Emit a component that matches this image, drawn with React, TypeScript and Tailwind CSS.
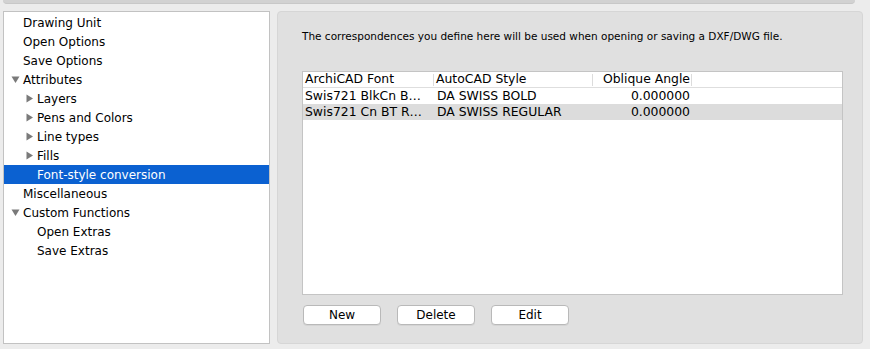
import React from "react";

const Tri = ({ open }: { open: boolean }) => (
  <svg width="9" height="9" viewBox="0 0 9 9" className="shrink-0">
    {open ? (
      <polygon points="0.5,1.5 8.5,1.5 4.5,8" fill="#7a7a7a" />
    ) : (
      <polygon points="1.5,0.5 1.5,8.5 8,4.5" fill="#7a7a7a" />
    )}
  </svg>
);

type Item = { label: string; level: number; tri?: "open" | "closed"; sel?: boolean };

const items: Item[] = [
  { label: "Drawing Unit", level: 0 },
  { label: "Open Options", level: 0 },
  { label: "Save Options", level: 0 },
  { label: "Attributes", level: 0, tri: "open" },
  { label: "Layers", level: 1, tri: "closed" },
  { label: "Pens and Colors", level: 1, tri: "closed" },
  { label: "Line types", level: 1, tri: "closed" },
  { label: "Fills", level: 1, tri: "closed" },
  { label: "Font-style conversion", level: 1, sel: true },
  { label: "Miscellaneous", level: 0 },
  { label: "Custom Functions", level: 0, tri: "open" },
  { label: "Open Extras", level: 1 },
  { label: "Save Extras", level: 1 },
];

export default function App() {
  return (
    <div
      className="w-[870px] h-[349px] bg-[#ececec] flex flex-col overflow-hidden"
      style={{ fontFamily: '"DejaVu Sans", "Liberation Sans", sans-serif' }}
    >
      <div className="ml-[3px] w-[852px] h-[4px] rounded-b-[5px] bg-[#d2d2d2] border-b border-[#c8c8c8]" />
      <div className="flex mt-[7px]">
        <div className="ml-[3px] w-[267px] h-[333px] bg-white border border-[#c2c2c2] pt-[1px]">
          {items.map((it) => (
            <div
              key={it.label}
              className={`h-[19px] flex items-center text-[12px] ${
                it.sel ? "bg-[#0b61d1] text-white" : "text-black"
              }`}
              style={{ paddingLeft: it.level === 0 ? 7 : 21 }}
            >
              <div className="w-[11px] flex items-center">
                {it.tri ? <Tri open={it.tri === "open"} /> : null}
              </div>
              <span className="ml-[1px] leading-none">{it.label}</span>
            </div>
          ))}
        </div>
        <div className="ml-[7px] w-[586px] h-[333px] bg-[#e0e0e0] border border-[#d6d6d6] rounded-[4px] pl-[24px] pt-[17px]">
          <div className="text-[10.5px] leading-[14px] text-black whitespace-nowrap">
            The correspondences you define here will be used when opening or saving a DXF/DWG file.
          </div>
          <div className="mt-[28px] w-[541px] h-[224px] bg-white border border-[#c4c4c4] text-[12.4px] text-black">
            <div className="h-[16px] flex items-center border-b border-[#dedede]">
              <div className="w-[131px] pl-[2px] border-r border-[#dcdcdc] h-[12px] flex items-center whitespace-nowrap">ArchiCAD Font</div>
              <div className="w-[159px] pl-[2px] border-r border-[#dcdcdc] h-[12px] flex items-center whitespace-nowrap">AutoCAD Style</div>
              <div className="w-[99px] pr-[1px] border-r border-[#dcdcdc] h-[12px] flex items-center justify-end whitespace-nowrap">Oblique Angle</div>
            </div>
            {[
              ["Swis721 BlkCn B\u2026", "DA SWISS BOLD", "0.000000", false],
              ["Swis721 Cn BT R\u2026", "DA SWISS REGULAR", "0.000000", true],
            ].map(([a, b, c, g]) => (
              <div key={a as string} className={`h-[16px] flex items-center ${g ? "bg-[#dcdcdc]" : ""}`}>
                <div className="w-[131px] pl-[2px] whitespace-nowrap overflow-hidden">{a}</div>
                <div className="w-[159px] pl-[3px] whitespace-nowrap">{b}</div>
                <div className="w-[99px] pr-[2px] text-right">{c}</div>
              </div>
            ))}
          </div>
          <div className="mt-[10px] flex gap-[16px] pl-[1px]">
            {["New", "Delete", "Edit"].map((l) => (
              <div
                key={l}
                className="w-[78px] h-[20px] bg-white border border-[#b9b9b9] rounded-[4px] flex items-center justify-center text-[12px] text-black shadow-[0_1px_0_rgba(0,0,0,0.05)]"
              >
                {l}
              </div>
            ))}
          </div>
        </div>
      </div>
    </div>
  );
}
